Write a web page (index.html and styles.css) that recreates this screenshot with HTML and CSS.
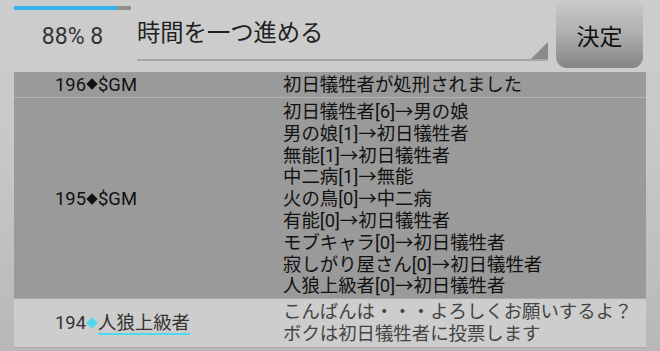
FILE: index.html
```html
<!DOCTYPE html>
<html lang="ja">
<head>
<meta charset="utf-8">
<link rel="stylesheet" href="styles.css">
</head>
<body>
<div class="header">
  <div class="status">
    <div class="progress"><div class="fill" style="width:88%"></div></div>
    <div class="pct">88% 8</div>
  </div>
  <div class="select">
    <span class="select-text">時間を一つ進める</span>
    <span class="corner"></span>
  </div>
  <button class="btn">決定</button>
</div>
<div class="log">
  <div class="row dark first">
    <div class="who">196<span class="dia"></span>$GM</div>
    <div class="msg">初日犠牲者が処刑されました</div>
  </div>
  <div class="row dark second">
    <div class="who">195<span class="dia"></span>$GM</div>
    <div class="msg">初日犠牲者[6]→男の娘<br>男の娘[1]→初日犠牲者<br>無能[1]→初日犠牲者<br>中二病[1]→無能<br>火の鳥[0]→中二病<br>有能[0]→初日犠牲者<br>モブキャラ[0]→初日犠牲者<br>寂しがり屋さん[0]→初日犠牲者<br>人狼上級者[0]→初日犠牲者</div>
  </div>
  <div class="row light">
    <div class="who">194<span class="dia cyan"></span><span class="name">人狼上級者</span></div>
    <div class="msg">こんばんは・・・よろしくお願いするよ？<br>ボクは初日犠牲者に投票します</div>
  </div>
</div>
</body>
</html>
```
FILE: styles.css
```css
html, body {
  margin: 0;
  padding: 0;
}
body {
  width: 660px;
  height: 351px;
  overflow: hidden;
  background: linear-gradient(#cccccc 0%, #c8c8c8 40%, #b8b8b8 100%);
  font-family: Roboto, "Noto Sans CJK JP", sans-serif;
  color: #111;
}
.header {
  display: flex;
  height: 72px;
  padding: 0 17px 0 14px;
  background: #cccccc;
}
.status {
  width: 117px;
  display: flex;
  flex-direction: column;
  align-items: center;
  padding-top: 6px;
}
.progress {
  width: 117px;
  height: 4px;
  background: #8e8e8e;
}
.fill {
  height: 100%;
  background: #33b5e5;
}
.pct {
  margin-top: 13px;
  font-size: 23px;
  line-height: 27px;
  color: #333;
}
.select {
  position: relative;
  margin-left: 6px;
  width: 411px;
  height: 59px;
  border-bottom: 2px solid #a6a6a6;
  box-sizing: content-box;
}
.select-text {
  display: block;
  padding-top: 19px;
  font-size: 23.3px;
  line-height: 28px;
  color: #222;
}
.corner {
  position: absolute;
  right: 0;
  bottom: 0;
  width: 0;
  height: 0;
  border-style: solid;
  border-width: 0 0 17px 17px;
  border-color: transparent transparent #8a8a8a transparent;
}
.btn {
  margin-left: 8px;
  width: 87px;
  height: 68px;
  border: none;
  border-radius: 11px;
  background: linear-gradient(#c9c9c9 0%, #b2b2b2 45%, #858585 100%);
  font-family: Roboto, "Noto Sans CJK JP", sans-serif;
  font-size: 23px;
  color: #111;
  padding: 2px 0 0 0;
}
.log {
  margin: 0 14px;
}
.row {
  display: grid;
  grid-template-columns: 269px 1fr;
  align-items: center;
  font-size: 18.4px;
  line-height: 21.8px;
}
.dark {
  background: #9a9a9a;
}
.first {
  height: 25px;
  border-bottom: 1px solid #b4b4b4;
}
.second {
  height: 201px;
  box-sizing: border-box;
  padding: 3px 0 2px;
  border-bottom: 1px solid #a8a8a8;
}
.light {
  background: #cdcdcd;
  height: 48px;
  border-bottom: 1px solid #a9a9a9;
  color: #444;
}
.who {
  padding-left: 41px;
  white-space: nowrap;
}
.light .who {
  color: #333;
}
.dia {
  display: inline-block;
  width: 8px;
  height: 8px;
  margin: 0 2px;
  background: #111;
  transform: rotate(45deg);
  vertical-align: 2.5px;
}
.dia.cyan {
  background: #4fd9ee;
}
.name {
  border-bottom: 2px solid #4fd9ee;
}
.msg {
  white-space: nowrap;
}
```
